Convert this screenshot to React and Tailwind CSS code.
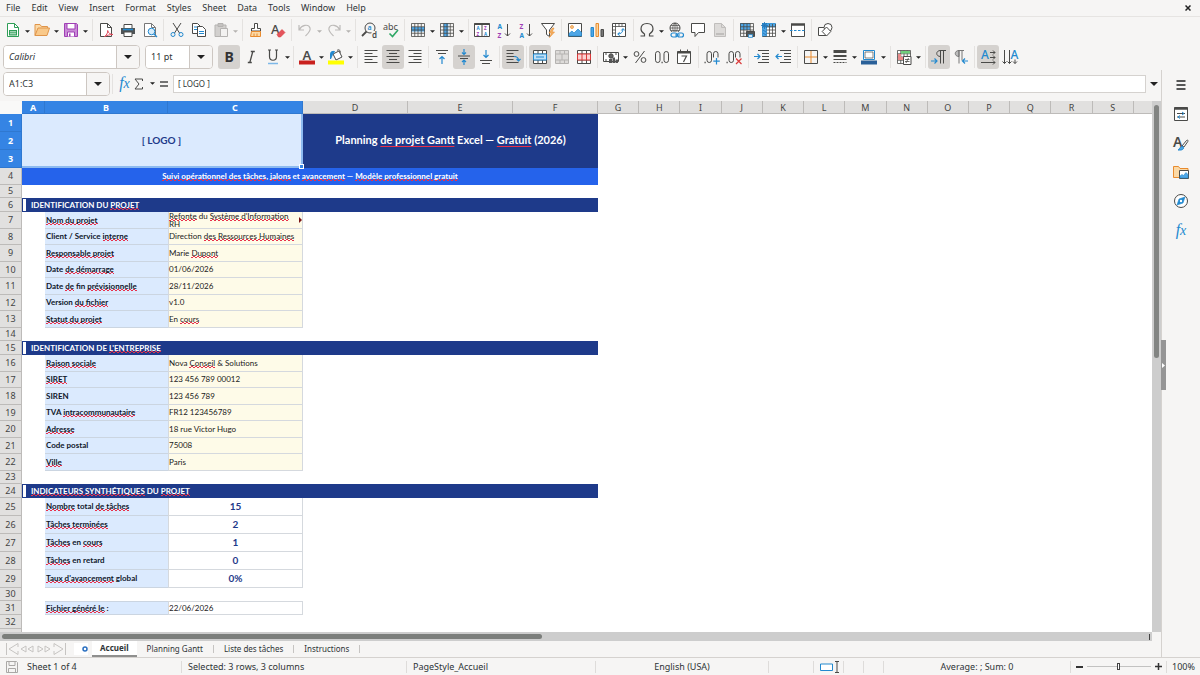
import React from "react";

const G = "#4a4a48";
const B = "#2389cf";
const O = "#e88b2e";
const R = "#d93a3a";
const P = "#a03fb5";

function Svg({ children, className = "size-4" }) {
  return (
    <svg viewBox="0 0 16 16" className={`overflow-visible ${className}`} fill="none" stroke={G} strokeWidth="1" aria-hidden="true">
      {children}
    </svg>
  );
}

function T({ x, y, s = 8, c = G, w = 400, children }) {
  return (
    <text x={x} y={y} fontSize={s} fill={c} stroke="none" fontWeight={w} fontFamily="Noto Sans, sans-serif">
      {children}
    </text>
  );
}

const alignLines = (kind) =>
  [1.5, 4.5, 7.5, 10.5, 13.5].map((y, i) => {
    const len = i % 2 === 0 ? 13 : 8;
    const x = kind === "left" ? 1.5 : kind === "center" ? 8 - len / 2 : 14.5 - len;
    return <path key={y} d={`M${x} ${y}h${len}`} />;
  });

const gridPath = "M1.5 1.5h13v13h-13zM1.5 4.75h13M1.5 8h13M1.5 11.25h13M4.75 1.5v13M8 1.5v13M11.25 1.5v13";

const icons = {
  newDoc: (
    <Svg>
      <path d="M2.5 1.5h7l4 4v9h-11z" fill="#fff" stroke="#2f9e57" />
      <path d="M9.5 1.5v4h4" stroke="#2f9e57" />
      <path d="M4 8h8v5.5H4z" fill="#2f9e57" stroke="none" />
      <path d="M5 9.8h6M5 11.8h6" stroke="#fff" strokeWidth=".8" />
    </Svg>
  ),
  open: (
    <Svg>
      <path d="M1 13.5v-11h5l1.5 2h6v2.5" fill="#fbd9a6" stroke="#e0954a" />
      <path d="M1 13.5l3-7.5h11.5l-2.5 7.5z" fill="#f9c98a" stroke="#e0954a" />
    </Svg>
  ),
  save: (
    <Svg>
      <path d="M1.5 1.5h12l1 1v12h-13z" fill="#c98ad6" stroke={P} />
      <path d="M4 1.5h8V7H4z" fill="#fff" stroke={P} />
      <path d="M4.5 14.5v-4.500h7v4.500" fill="#fff" stroke={P} />
      <path d="M6 11.500h1.500v3H6z" fill={P} stroke="none" />
    </Svg>
  ),
  pdf: (
    <Svg>
      <path d="M2.500 1.500h7l4 4v9h-11z" fill="#fff" />
      <path d="M9.500 1.500v4h4" />
      <path d="M6.500 14.500c2-1 3.500-4 3.200-6 .5 2.500 2.500 4 5.300 4-3 0-6 .8-8.500 2z" stroke="#e0485a" fill="#fff" />
    </Svg>
  ),
  print: (
    <Svg>
      <path d="M4 6V2.500h8V6" fill="#fff" />
      <path d="M1 6h14v6H1z" fill="#4f5456" stroke="none" />
      <path d="M3 7.500h10" stroke={B} strokeWidth="1.500" />
      <path d="M4 10h8v4.500H4z" fill="#fff" />
    </Svg>
  ),
  preview: (
    <Svg>
      <path d="M2.500 1.500h7l4 4v9h-11z" fill="#fff" stroke="#777" />
      <path d="M9.500 1.500v4h4" stroke="#777" />
      <circle cx="9.500" cy="9.500" r="3.300" fill="#d7ecfa" stroke={B} />
      <path d="M12 12l3 3" stroke={B} strokeWidth="1.300" />
    </Svg>
  ),
  cut: (
    <Svg>
      <path d="M4 1l6.500 10M12 1L5.500 11" />
      <circle cx="4" cy="12.500" r="2" stroke={B} />
      <circle cx="12" cy="12.500" r="2" stroke={B} />
    </Svg>
  ),
  copy: (
    <Svg>
      <path d="M1.500 1.500h5l3 3v7h-8z" fill="#fff" />
      <path d="M3 5h4M3 7.500h3" stroke={B} />
      <path d="M6.500 4.500h5l3 3v7h-8z" fill="#fff" />
      <path d="M8 9.500h5M8 11.500h5" stroke={B} />
    </Svg>
  ),
  paste: (
    <Svg>
      <path d="M2 3h11v11.500H2z" fill="#d2d0ce" stroke="#b5b3b1" />
      <path d="M5 1.500h5v3H5z" fill="#c5c3c1" stroke="#b5b3b1" />
      <path d="M7.500 6.500h7v8h-7z" fill="#f3f2f1" stroke="#b5b3b1" />
    </Svg>
  ),
  brush: (
    <Svg>
      <path d="M6.500 1.500h3v5h3v2.500h-9V6.500h3z" fill="#fff" />
      <path d="M3.500 9.500h9v5h-10z" fill="#fbd9a6" stroke={O} />
      <path d="M6 11.500v3M9 11.500v3" stroke={O} />
    </Svg>
  ),
  clear: (
    <Svg>
      <T x={1} y={12} s={13} w={500}>A</T>
      <path d="M7 12.500l5-5 3 3-4.500 4.500h-2z" fill="#e4545c" stroke={R} strokeWidth=".6" />
    </Svg>
  ),
  undo: (
    <Svg>
      <path d="M2 3v5h5M2.500 7.500c2-4.500 9-6 10.500-1.500 1 3-2.500 6-4.500 8" stroke="#bdbbb9" strokeWidth="1.200" />
    </Svg>
  ),
  redo: (
    <Svg>
      <path d="M14 3v5H9M13.500 7.500C11.500 3 4.500 1.500 3 6c-1 3 2.500 6 4.500 8" stroke="#bdbbb9" strokeWidth="1.200" />
    </Svg>
  ),
  find: (
    <Svg>
      <circle cx="9" cy="6" r="5" />
      <path d="M5.500 9.500L1 14" strokeWidth="1.800" />
      <path d="M10.500 9h5.500v7h-5.500z" fill="#f6f5f4" stroke="none" />
      <T x={6.500} y={8} s={7} c={B} w={600}>a</T>
      <T x={11} y={15.500} s={8} w={600}>d</T>
    </Svg>
  ),
  spell: (
    <Svg>
      <T x={0} y={7.500} s={9}>abc</T>
      <path d="M6.500 11.500l3 3L15 8" stroke="#2fa866" strokeWidth="1.600" />
    </Svg>
  ),
  rows: (
    <Svg>
      <path d="M1 5h14v4.500H1z" fill="#4ea6e6" stroke="none" />
      <path d={gridPath} strokeWidth=".8" />
    </Svg>
  ),
  cols: (
    <Svg>
      <path d="M4.750 1h4.500v14h-4.500z" fill="#4ea6e6" stroke="none" />
      <path d={gridPath} strokeWidth=".8" />
    </Svg>
  ),
  sort: (
    <Svg>
      <path d="M.5 1.500h15v13H.5z" fill="#fff" />
      <path d="M.5 2h15" strokeWidth="2" />
      <path d="M8 2v12.500" />
      <T x={2.500} y={7.500} s={4.500} c={B} w={700}>A</T>
      <T x={2.500} y={13.800} s={4.500} c={P} w={700}>Z</T>
      <T x={10} y={7.500} s={4.500} c={P} w={700}>Z</T>
      <T x={10} y={13.800} s={4.500} c={B} w={700}>A</T>
    </Svg>
  ),
  asc: (
    <Svg>
      <T x={1.500} y={6.500} s={6.500} c={B} w={700}>A</T>
      <T x={1.500} y={15.500} s={6.500} c={P} w={700}>Z</T>
      <path d="M11.500 2v12M9 11.500l2.500 2.500 2.500-2.500" />
    </Svg>
  ),
  desc: (
    <Svg>
      <T x={1.500} y={6.500} s={6.500} c={P} w={700}>Z</T>
      <T x={1.500} y={15.500} s={6.500} c={B} w={700}>A</T>
      <path d="M11.500 2v12M9 11.500l2.500 2.500 2.500-2.500" />
    </Svg>
  ),
  filter: (
    <Svg>
      <path d="M1.500 1.500h13L9.500 8v6.500l-3-2V8z" fill="#fff" />
      <path d="M12.500 6l-3.500 5h2.500L9.500 15.500 14.500 10H12l2-4z" fill="#f4b266" stroke={O} strokeWidth=".6" />
    </Svg>
  ),
  image: (
    <Svg>
      <path d="M1.500 1.500h13v13h-13z" fill="#fff" />
      <circle cx="5" cy="5" r="1.500" fill="#f7c98b" stroke={O} strokeWidth=".7" />
      <path d="M2 14v-2.500L5 9l2 2 4-4 3.500 3.500V14z" fill="#4ea6e6" stroke={B} strokeWidth=".7" />
    </Svg>
  ),
  chart: (
    <Svg>
      <path d="M2 5.500h2.500v9H2z" fill="#4ea6e6" stroke={B} />
      <path d="M7 1.500h2.500v13H7z" fill="#fbd49c" stroke={O} />
      <path d="M12 7.500h2.500v7H12z" fill="#777" />
    </Svg>
  ),
  pivot: (
    <Svg>
      <path d="M1.500 1.500h13v13h-13z" fill="#fff" />
      <path d="M4.500 1.500v13M1.500 4.500h13M8 1.500v3M11 1.500v3M1.500 8h3M1.500 11h3" strokeWidth=".8" />
      <path d="M7 12c3 0 5-2 5-5M10.300 8.500L12 6.500l1.700 2M8.700 10.300L6.700 12l2 1.700" stroke={B} />
    </Svg>
  ),
  omega: (
    <Svg>
      <path d="M1.500 14h4v-2C3 10.500 2 9 2 7c0-3.500 2.500-5.500 6-5.500S14 3.500 14 7c0 2-1 3.500-3.500 5v2h4" strokeWidth="1.200" />
    </Svg>
  ),
  link: (
    <Svg>
      <circle cx="7" cy="6" r="5" />
      <path d="M7 1v10M2 6h10M3 3.500h8M3 8.500h8M7 1c-3 3-3 7 0 10M7 1c3 3 3 7 0 10" strokeWidth=".7" />
      <path d="M3 10h13v6H3z" fill="#f6f5f4" stroke="none" />
      <rect x="3" y="11" width="6" height="4" rx="2" stroke={B} strokeWidth="1.200" />
      <rect x="9.500" y="11" width="6" height="4" rx="2" stroke={B} strokeWidth="1.200" />
      <path d="M7 13h5" stroke={B} />
    </Svg>
  ),
  comment: (
    <Svg>
      <path d="M1.500 1.500h13v9h-6L5 14.500v-4H1.500z" fill="#fff" />
    </Svg>
  ),
  headfoot: (
    <Svg>
      <path d="M2.500 1.500h7l4 4v9h-11z" fill="#dddbd9" stroke="#c0bebc" />
      <path d="M4 11h8v2H4z" fill="#c0bebc" stroke="none" />
      <path d="M9.500 1.500v4h4" stroke="#c0bebc" />
    </Svg>
  ),
  printArea: (
    <Svg>
      <path d="M1 1h10v7H1z" fill="#4ea6e6" stroke="none" />
      <path d={gridPath} strokeWidth=".8" />
      <path d="M7.500 9.500h8v5h-8z" fill="#4f5456" />
      <path d="M9.500 12.500h4v3h-4z" fill="#cfe6f7" stroke={B} strokeWidth=".7" />
    </Svg>
  ),
  freeze: (
    <Svg>
      <path d="M1.500 1.500h13v13h-13z" fill="#fff" stroke="none" />
      <path d="M1.500 1.500h4v13h-4zM1.500 1.500h13v3.300h-13z" fill="#4ea6e6" stroke={B} strokeWidth=".8" />
      <path d="M5.500 8h9M5.500 11.250h9M8.500 2v12.500M11.500 2v12.500M14.500 2v12.500M1.500 14.500h13M5.500 4.800h9" strokeWidth=".8" />
      <path d="M3.500 0v7M0 3.500h7M1 1l5 5M6 1L1 6M2 8l3 2M2 11l3 2" stroke="#2272b4" strokeWidth=".8" />
    </Svg>
  ),
  split: (
    <Svg>
      <path d="M1.500 2v12.500h13V2" fill="#fff" />
      <path d="M1 2.500h14" strokeWidth="2.500" />
      <path d="M0 8.500h16" stroke={B} strokeDasharray="2.500 1.500" />
    </Svg>
  ),
  shapes: (
    <Svg>
      <path d="M1.500 5.500h8v8h-8z" fill="#fff" />
      <circle cx="11" cy="5.500" r="4" fill="#fff" />
      <path d="M9.500 5l4.300 4.500-4.300 4.500-4.300-4.500z" fill="#fff" />
    </Svg>
  ),
  bold: <Svg><T x={3.500} y={13} s={14} w={700} c="#333">B</T></Svg>,
  italic: (
    <Svg>
      <path d="M9.800 2.500L6.800 13.500M7.800 2.500h4M4.800 13.500h4" strokeWidth="1.300" />
    </Svg>
  ),
  underline: (
    <Svg>
      <path d="M4.500 1v6.500c0 5 7 5 7 0V1M3 1h3M10 1h3" strokeWidth="1.200" />
      <path d="M3 14.500h10" stroke="#7db8e8" strokeWidth="1.500" />
    </Svg>
  ),
  fontColor: (
    <Svg>
      <T x={3.500} y={10.500} s={13} w={600}>A</T>
      <path d="M0 13.500h16" stroke="#c9211e" strokeWidth="4" />
    </Svg>
  ),
  highlight: (
    <Svg>
      <path d="M5 5l6-3 3 6-6 3z" fill="#fff" />
      <path d="M9 1.500c2-1.500 3-.5 3.500 2" />
      <path d="M2.500 10V4.500c0-1.500 2-2.500 4-2l-2 3z" fill={B} stroke={B} />
      <path d="M0 13.500h16" stroke="#ffff00" strokeWidth="4" />
    </Svg>
  ),
  left: <Svg>{alignLines("left")}</Svg>,
  center: <Svg>{alignLines("center")}</Svg>,
  right: <Svg>{alignLines("right")}</Svg>,
  top: (
    <Svg>
      <path d="M2 1.500h12M4 4.500h8" />
      <path d="M8 15V7.500M5.500 10L8 7.500l2.500 2.500" stroke={B} strokeWidth="1.200" />
    </Svg>
  ),
  middle: (
    <Svg>
      <path d="M2 7h12M4 9.500h8" />
      <path d="M8 0v5M6 3.500l2 2 2-2M8 16v-4.500M6 13l2-2 2 2" stroke={B} strokeWidth="1.200" />
    </Svg>
  ),
  bottom: (
    <Svg>
      <path d="M2 11.500h12M4 14.500h8" />
      <path d="M8 1v7.500M5.500 6L8 8.500 10.500 6" stroke={B} strokeWidth="1.200" />
    </Svg>
  ),
  wrap: (
    <Svg>
      <path d="M1.500 1.500h12M1.500 4.500h7M1.500 7.500h9M1.500 10.500h7M1.500 13.500h12" />
      <path d="M9 7.500c3 0 4.500 1 4.500 4M11.500 10l2 2 2-2" stroke={B} strokeWidth="1.200" />
    </Svg>
  ),
  merge: (
    <Svg>
      <path d="M1.500 1.500h13v13h-13z" fill="#fff" />
      <path d="M1.500 5h13M1.500 11h13M6 1.500V5M10.500 1.500V5M6 11v3.500M10.500 11v3.500" />
      <path d="M1.500 5h13v6h-13z" fill="#bfe0f7" stroke={B} />
      <path d="M4 8h8" stroke={B} />
    </Svg>
  ),
  mergeOff: (
    <Svg>
      <path d="M1.500 1.500h13v13h-13z" fill="#dddbd9" stroke="#b5b3b1" />
      <path d="M1.500 5h13M1.500 11h13M6 1.500V5M10.500 1.500V5M6 11v3.500M10.500 11v3.500M8 5v6" stroke="#b5b3b1" />
    </Svg>
  ),
  unmerge: (
    <Svg>
      <path d="M1.500 1.500h13v13h-13z" fill="#fff" />
      <path d="M1.500 5h13M1.500 11h13M6 1.500V5M10.500 1.500V5M6 11v3.500M10.500 11v3.500" />
      <path d="M1.500 5h13v6h-13zM6 5v6M10.500 5v6" fill="#fbd3d3" stroke={R} />
    </Svg>
  ),
  currency: (
    <Svg>
      <path d="M.5 3.500h15v9H.5z" fill="#fff" />
      <circle cx="8" cy="7" r="2.200" fill="#666" />
      <path d="M2 5h2M12 5h2M2 11h2" />
      <path d="M6 10h3v4H6zM9.500 8.500h2.500V14H9.500zM12.500 10.500H15V14h-2.500z" fill="#555" stroke="none" />
    </Svg>
  ),
  percent: (
    <Svg>
      <circle cx="4.500" cy="5" r="2.400" />
      <circle cx="11.500" cy="11" r="2.400" />
      <path d="M12.500 2l-9 12" />
    </Svg>
  ),
  number: (
    <Svg>
      <rect x="1.500" y="2.500" width="4.500" height="11" rx="2.250" />
      <path d="M7.500 13.500h1.200" strokeWidth="1.300" />
      <rect x="10" y="2.500" width="4.500" height="11" rx="2.250" />
    </Svg>
  ),
  date: (
    <Svg>
      <path d="M1.500 2.500h13v12h-13z" fill="#fff" />
      <path d="M1.500 3.500h13" strokeWidth="2" />
      <path d="M4.500 .5v3M11.500 .5v3" />
      <path d="M5.500 7h5l-3 6" strokeWidth="1.200" />
    </Svg>
  ),
  addDec: (
    <Svg>
      <path d="M.5 13.500h1.200" strokeWidth="1.300" />
      <rect x="3" y="2.500" width="4.500" height="11" rx="2.250" />
      <rect x="9.500" y="2.500" width="4.500" height="11" rx="2.250" />
      <path d="M9 8.500h7v7H9z" fill="#f6f5f4" stroke="none" />
      <path d="M12.500 9v6.500M9.300 12.200h6.500" stroke={B} strokeWidth="1.200" />
    </Svg>
  ),
  delDec: (
    <Svg>
      <path d="M.5 13.500h1.200" strokeWidth="1.300" />
      <rect x="3" y="2.500" width="4.500" height="11" rx="2.250" />
      <rect x="9.500" y="2.500" width="4.500" height="11" rx="2.250" />
      <path d="M9 8.500h7v7H9z" fill="#f6f5f4" stroke="none" />
      <path d="M10 9.500l5.500 5.500M15.500 9.500L10 15" stroke={R} strokeWidth="1.200" />
    </Svg>
  ),
  indent: (
    <Svg>
      <path d="M4 1.500h11M8 4.500h7M8 7.500h7M8 10.500h7M4 13.500h11" />
      <path d="M0 7.500h6M3.500 5L6 7.500 3.500 10" stroke={B} strokeWidth="1.200" />
    </Svg>
  ),
  outdent: (
    <Svg>
      <path d="M4 1.500h11M8 4.500h7M8 7.500h7M8 10.500h7M4 13.500h11" />
      <path d="M0 7.500h6M2.500 5L0 7.500 2.500 10" stroke={B} strokeWidth="1.200" />
    </Svg>
  ),
  borders: (
    <Svg>
      <path d="M8 2v12M2 8h12" stroke={O} />
      <path d="M1.500 1.500h13v13h-13z" />
    </Svg>
  ),
  lineStyle: (
    <Svg>
      <path d="M1.500 2.500h13" strokeWidth="3" />
      <path d="M1.500 7h13" strokeWidth="2" />
      <path d="M1.500 10.500h13" />
      <path d="M1.500 13.500h13" strokeDasharray="2 1" />
    </Svg>
  ),
  lineColor: (
    <Svg>
      <path d="M2.500 1.500h11v9h-11z" fill="#fff" stroke={B} />
      <path d="M4 3h8v6H4z" strokeWidth=".7" />
      <path d="M0 13.500h16" stroke="#2a6099" strokeWidth="4" />
    </Svg>
  ),
  cond: (
    <Svg>
      <path d={gridPath} strokeWidth=".8" fill="#fff" />
      <path d="M5 2h9v2.500H5z" fill="#6fcf7c" stroke="none" />
      <path d="M2 5h3v6H2zM5 8h3v3H5z" fill="#e88a8a" stroke="none" />
      <path d="M7.500 7.500h7.500v8H7.500z" fill="#fff" />
      <path d="M9 10.500h4.500M9 12.500h4.500M12.500 9l-2.500 5" strokeWidth=".8" />
    </Svg>
  ),
  ltr: (
    <Svg>
      <path d="M9 1.500h6M9.500 1.500v13M12.500 1.500v13M9.500 1.500c-5 0-5 6 0 6" fill="none" />
      <path d="M0 12h6M3.500 9.500L6 12l-2.500 2.500" stroke={B} strokeWidth="1.200" />
    </Svg>
  ),
  rtl: (
    <Svg>
      <path d="M5 1.500h6M6 1.500v13M9 1.500v10M6 1.500c-5 0-5 6 0 6z" fill="#bbb" stroke="#777" />
      <path d="M15 12H9.500M12 9.500L9.500 12l2.500 2.500" stroke={B} strokeWidth="1.200" />
    </Svg>
  ),
  textLtr: (
    <Svg>
      <T x={1} y={9.500} s={12} w={500} c={B}>A</T>
      <path d="M10 3.500h5M13 1.500l2 2-2 2M10 8.500h5M13 6.500l2 2-2 2M1 13.500h14M13 11.500l2 2-2 2" />
    </Svg>
  ),
  textTtb: (
    <Svg>
      <T x={8.500} y={9.500} s={12} w={500} c={B}>A</T>
      <path d="M2.500 1v13.500M.5 12.500l2 2 2-2M7.500 1v13.500M5.500 12.500l2 2 2-2M13 10.500v4M11 12.500l2 2 2-2" />
    </Svg>
  ),
};

const SEP = "sep";
const GAP = "gap";

const bar1 = [
  ["newDoc", "New", 1], ["open", "Open", 1], ["save", "Save", 1], GAP,
  ["pdf", "Export as PDF"], ["print", "Print"], ["preview", "Print Preview"], SEP,
  ["cut", "Cut"], ["copy", "Copy"], ["paste", "Paste", 2], GAP,
  ["brush", "Clone Formatting"], ["clear", "Clear Direct Formatting"], SEP,
  ["undo", "Undo", 2], ["redo", "Redo", 2], GAP,
  ["find", "Find and Replace"], ["spell", "Spelling"], SEP,
  ["rows", "Row", 1], ["cols", "Column", 1], GAP,
  ["sort", "Sort"], ["asc", "Sort Ascending"], ["desc", "Sort Descending"], ["filter", "AutoFilter"], SEP,
  ["image", "Insert Image"], ["chart", "Insert Chart"], ["pivot", "Pivot Table"], GAP,
  ["omega", "Special Character", 1], ["link", "Hyperlink"], ["comment", "Comment"], ["headfoot", "Headers and Footers"], SEP,
  ["printArea", "Define Print Area"], ["freeze", "Freeze Rows and Columns", 1], ["split", "Split Window"], SEP,
  ["shapes", "Show Draw Functions"],
];

const bar2 = [
  ["bold", "Bold", 0, true], ["italic", "Italic"], ["underline", "Underline", 1], SEP,
  ["fontColor", "Font Color", 1], ["highlight", "Background Color", 1], GAP,
  ["left", "Align Left"], ["center", "Center Horizontally", 0, true], ["right", "Align Right"], SEP,
  ["top", "Align Top"], ["middle", "Center Vertically", 0, true], ["bottom", "Align Bottom"], SEP,
  ["wrap", "Wrap Text", 0, true], SEP,
  ["merge", "Merge and Center Cells", 0, true], ["mergeOff", "Merge Cells"], ["unmerge", "Unmerge Cells"], SEP,
  ["currency", "Format as Currency", 1], ["percent", "Format as Percent"], ["number", "Format as Number"], ["date", "Format as Date"], GAP,
  ["addDec", "Add Decimal Place"], ["delDec", "Delete Decimal Place"], GAP,
  ["indent", "Increase Indent"], ["outdent", "Decrease Indent"], SEP,
  ["borders", "Borders", 1], ["lineStyle", "Border Style", 1], ["lineColor", "Border Color", 1], GAP,
  ["cond", "Conditional Formatting", 1], GAP,
  ["ltr", "Left-To-Right", 0, true], ["rtl", "Right-To-Left"], SEP,
  ["textLtr", "Text direction left to right", 0, true], ["textTtb", "Text direction top to bottom"],
];

function Caret({ big, dim }) {
  return (
    <svg viewBox="0 0 8 4" className={big ? "h-1 w-2" : "h-[3px] w-[5px]"} aria-hidden="true">
      <path d="M0 0h8L4 4z" fill={dim ? "#b5b3b1" : "#222"} />
    </svg>
  );
}

function Tools({ items }) {
  return items.map((it, i) => {
    if (it === SEP || it === GAP)
      return (
        <div key={i} className={`flex h-[22px] shrink-0 justify-center ${it === SEP ? "w-[5px]" : "w-[6px]"}`}>
          <div className="w-px bg-[#e4e2e0]" />
        </div>
      );
    const [icon, label, arrow, on] = it;
    return (
      <div key={i} className="flex shrink-0 items-center">
        <button
          aria-label={label}
          className={`flex h-6 w-[22px] items-center justify-center rounded-[3px] ${on ? "bg-[#d5d2cf]" : ""}`}
        >
          {icons[icon]}
        </button>
        {arrow ? (
          <button aria-label={`${label} options`} className="flex h-6 w-[7px] items-center justify-center pt-0.5">
            <Caret dim={arrow === 2} />
          </button>
        ) : null}
      </div>
    );
  });
}

function Combo({ label, value, width, italic }) {
  return (
    <div className={`flex h-6 shrink-0 overflow-hidden rounded-[4px] border border-[#cdc7c2] bg-white ${width}`}>
      <input
        aria-label={label}
        defaultValue={value}
        className={`min-w-0 flex-1 bg-white px-[5px] text-[9px] text-[#2e3436] outline-none ${italic ? "italic" : ""}`}
      />
      <button
        aria-label={`${label} list`}
        className="flex w-[23px] items-center justify-center border-l border-[#cdc7c2] bg-[#f6f5f4]"
      >
        <Caret big />
      </button>
    </div>
  );
}

const wave =
  "bg-[linear-gradient(90deg,#e8304a_50%,transparent_50%),linear-gradient(90deg,transparent_50%,#e8304a_50%)] bg-[length:4px_1px,4px_1px] bg-[position:0_100%,0_calc(100%-1px)] bg-repeat-x";

/* Text between asterisks is flagged by the spell checker. */
function Words({ text, straight }) {
  return text.split("*").map((part, i) =>
    i % 2 ? (
      <span key={i} className={straight ? "underline decoration-[#e8304a] decoration-1 underline-offset-2" : wave}>
        {part}
      </span>
    ) : (
      <React.Fragment key={i}>{part}</React.Fragment>
    )
  );
}

const rows = [
  { n: 1, h: "h-[18px]", kind: "title" },
  { n: 2, h: "h-[18px]", kind: "merged" },
  { n: 3, h: "h-[18px]", kind: "merged" },
  { n: 4, h: "h-[17px]", kind: "subtitle" },
  { n: 5, h: "h-[13px]" },
  { n: 6, h: "h-[14px]", kind: "section", a: "IDENTIFICATION DU *PROJET*" },
  { n: 7, h: "h-[17px]", kind: "info", a: "*Nom du projet*", b: "*Refonte* du *Système d'Information* RH", over: true },
  { n: 8, h: "h-[16px]", kind: "info", a: "Client / Service *interne*", b: "Direction *des Ressources Humaines*" },
  { n: 9, h: "h-[17px]", kind: "info", a: "*Responsable projet*", b: "Marie *Dupont*" },
  { n: 10, h: "h-[16px]", kind: "info", a: "Date *de démarrage*", b: "01/06/2026" },
  { n: 11, h: "h-[17px]", kind: "info", a: "Date *de* fin *prévisionnelle*", b: "28/11/2026" },
  { n: 12, h: "h-[16px]", kind: "info", a: "Version *du fichier*", b: "v1.0" },
  { n: 13, h: "h-[17px]", kind: "info", a: "*Statut du projet*", b: "En *cours*" },
  { n: 14, h: "h-[13px]" },
  { n: 15, h: "h-[14px]", kind: "section", a: "IDENTIFICATION DE *L'ENTREPRISE*" },
  { n: 16, h: "h-[17px]", kind: "info", a: "*Raison sociale*", b: "Nova *Conseil* & Solutions" },
  { n: 17, h: "h-[16px]", kind: "info", a: "*SIRET*", b: "123 456 789 00012" },
  { n: 18, h: "h-[17px]", kind: "info", a: "SIREN", b: "123 456 789" },
  { n: 19, h: "h-[16px]", kind: "info", a: "TVA *intracommunautaire*", b: "FR12 123456789" },
  { n: 20, h: "h-[17px]", kind: "info", a: "*Adresse*", b: "18 rue Victor Hugo" },
  { n: 21, h: "h-[16px]", kind: "info", a: "Code postal", b: "75008" },
  { n: 22, h: "h-[17px]", kind: "info", a: "*Ville*", b: "Paris" },
  { n: 23, h: "h-[13px]" },
  { n: 24, h: "h-[14px]", kind: "section", a: "*INDICATEURS SYNTHÉTIQUES* DU *PROJET*" },
  { n: 25, h: "h-[18px]", kind: "kpi", a: "*Nombre* total *de tâches*", b: "15" },
  { n: 26, h: "h-[18px]", kind: "kpi", a: "*Tâches terminées*", b: "2" },
  { n: 27, h: "h-[18px]", kind: "kpi", a: "*Tâches* en *cours*", b: "1" },
  { n: 28, h: "h-[18px]", kind: "kpi", a: "*Tâches* en retard", b: "0" },
  { n: 29, h: "h-[18px]", kind: "kpi", a: "*Taux d'avancement* global", b: "0%" },
  { n: 30, h: "h-[13px]" },
  { n: 31, h: "h-[14px]", kind: "date", a: "*Fichier généré le* :", b: "22/06/2026" },
  { n: 32, h: "h-[14px]" },
  { n: 33, h: "h-[14px]" },
];

function Cells({ row }) {
  const { kind, a, b, over } = row;
  if (kind === "title")
    return (
      <>
        <td
          colSpan={3}
          rowSpan={3}
          className="relative border-r-2 border-b-2 border-[#8cbaf0] bg-[#dbeafe] p-0 text-center text-[10px] font-bold text-[#1e3a8a]"
        >
          [ LOGO ]
          <span className="absolute -right-[3px] -bottom-[3px] z-10 size-[5px] border border-white bg-[#3584e4]" />
        </td>
        <td colSpan={3} rowSpan={3} className="bg-[#1e3a8a] p-0 pb-0.5 text-center text-[11px] font-bold text-white">
          <Words straight text="Planning *de projet Gantt* Excel — *Gratuit* (2026)" />
        </td>
        <td colSpan={14} rowSpan={3} className="p-0" />
      </>
    );
  if (kind === "merged") return null;
  if (kind === "subtitle")
    return (
      <>
        <td colSpan={6} className="bg-[#2563eb] p-0 pb-0.5 text-center text-[8px] leading-[10px] font-bold text-white">
          <Words text="*Suivi opérationnel des tâches*, *jalons* et *avancement* — *Modèle professionnel gratuit*" />
        </td>
        <td colSpan={14} className="p-0" />
      </>
    );
  if (kind === "section")
    return (
      <>
        <td colSpan={6} className="bg-[#1e3a8a] p-0 text-[8px] leading-[10px] font-bold text-white">
          <div className="flex items-center gap-[5px] pl-px">
            <span className="h-3 w-[3px] bg-white" />
            <span><Words text={a} /></span>
          </div>
        </td>
        <td colSpan={14} className="p-0" />
      </>
    );
  if (kind) {
    const tone = kind === "info" ? "bg-[#fefbe8]" : "bg-white";
    const top = kind === "date" ? "border-t" : "";
    return (
      <>
        <td className="p-0" />
        <td className={`border-b border-[#cbd5e1] bg-[#dbeafe] p-0 pb-px pl-px text-[8px] leading-[10px] font-bold whitespace-nowrap text-[#0f172a] ${top}`}>
          <Words text={a} />
        </td>
        <td
          className={`border-r border-b border-l border-[#d5d9de] p-0 ${over ? "" : "pb-px"} ${top} ${tone} ${
            kind === "kpi" ? "text-center text-[10px] leading-3 font-bold text-[#1e3a8a]" : "text-[8px] leading-[10px] text-[#1a1a1a]"
          }`}
        >
          {over ? (
            <div className="flex h-4 items-center justify-between">
              <span className="leading-[8px]"><Words text={b} /></span>
              <svg viewBox="0 0 3 6" className="h-1.5 w-[3px] shrink-0" aria-hidden="true">
                <path d="M0 0l3 3-3 3z" fill="#7a1515" />
              </svg>
            </div>
          ) : (
            <Words text={b} />
          )}
        </td>
        <td colSpan={17} className="p-0" />
      </>
    );
  }
  return <td colSpan={20} className="p-0" />;
}

function Sheet() {
  const letters = "ABCDEFGHIJKLMNOPQRS".split("");
  return (
    <table className="w-full table-fixed border-separate border-spacing-0">
      <colgroup>
        <col className="w-[22px]" />
        <col className="w-[23px]" />
        <col className="w-[123px]" />
        <col className="w-[135px]" />
        <col className="w-[105px]" />
        <col className="w-[105px]" />
        <col className="w-[85px]" />
        {letters.slice(6).map((l) => <col key={l} />)}
        <col className="w-[18px]" />
      </colgroup>
      <thead>
        <tr className="h-[13px] text-[9px] leading-[11px]">
          <td className="bg-[#f9f9f8] p-0" />
          {letters.map((l, i) => (
            <th
              key={l}
              scope="col"
              className={`border-r p-0 ${
                i < 3
                  ? "border-b border-[#2f78d0] bg-[#3584e4] font-bold text-white"
                  : "border-b border-[#bdbbb9] bg-[#e1e0df] font-normal text-[#444]"
              }`}
            >
              {l}
            </th>
          ))}
          <td className="border-b border-[#bdbbb9] bg-[#e1e0df] p-0" />
        </tr>
      </thead>
      <tbody className="font-['Lato',sans-serif]">
        {rows.map((row) => (
          <tr key={row.n} className={row.h}>
            <th
              scope="row"
              className={`border-r border-b p-0 font-['Noto_Sans',sans-serif] text-[9px] leading-3 ${
                row.n < 4
                  ? "border-[#2f78d0] bg-[#3584e4] font-bold text-white"
                  : "border-[#bdbbb9] bg-[#e1e0df] font-normal text-[#444]"
              }`}
            >
              {row.n}
            </th>
            <Cells row={row} />
          </tr>
        ))}
      </tbody>
    </table>
  );
}

const side = [
  ["Sidebar Settings", <path key="a" d="M3.500 4h9M3.500 8h9M3.500 12h9" strokeWidth="1.500" stroke="#222" />],
  ["Properties", (
    <g key="b">
      <path d="M1.500 1.500h13v13h-13z" fill="#fff" />
      <path d="M1.500 2.500h13" strokeWidth="2.500" />
      <path d="M4 7.500h8M4 11h8" />
      <path d="M9 6l2 1.500L9 9M7 9.500L5 11l2 1.500" stroke={B} />
    </g>
  )],
  ["Styles", (
    <g key="c">
      <T x={0} y={12} s={14} w={600}>A</T>
      <path d="M9 11l4.500-5.500c1-1 2 0 1.300 1L11 12z" fill="#fff" />
      <path d="M5 15c1 0 2-3.500 4-3.500s2.500 3-1 3.500z" fill="#4ea6e6" stroke={B} />
    </g>
  )],
  ["Gallery", (
    <g key="d">
      <path d="M.5 13.500v-11h5l1.500 2h8v9z" fill="#fbd9a6" stroke={O} />
      <path d="M6.500 6.500h9v8h-9z" fill="#fff" />
      <path d="M7 14v-2l2-1.500 1.500 1 2.500-3 2 2V14z" fill="#4ea6e6" stroke={B} strokeWidth=".6" />
    </g>
  )],
  ["Navigator", (
    <g key="e">
      <circle cx="8" cy="8" r="6.500" fill="#fff" />
      <path d="M12 4l-2 6-6 2 2-6z" fill={B} stroke={B} strokeWidth=".6" />
      <circle cx="8" cy="8" r="1.200" fill="#fff" stroke="none" />
    </g>
  )],
];

function Fx() {
  return <span className="font-['Liberation_Serif',serif] text-[16px] leading-4 text-[#2389cf] italic">f<span className="text-[14px]">x</span></span>;
}

function Seg({ className = "", children }) {
  return <div className={`flex h-3 items-center ${className}`}>{children}</div>;
}

export default function App() {
  const menus = ["File", "Edit", "View", "Insert", "Format", "Styles", "Sheet", "Data", "Tools", "Window", "Help"];
  const tabs = ["Accueil", "Planning Gantt", "Liste des tâches", "Instructions"];
  return (
    <div className="flex h-screen flex-col overflow-hidden bg-[#f6f5f4] font-['Noto_Sans',sans-serif] text-[9px] leading-3 text-[#2e3436]">
      <nav className="flex h-[17px] shrink-0 items-center gap-[11px] border-b border-[#e6e4e2] px-[6px]">
        {menus.map((m) => <button key={m}>{m}</button>)}
        <button aria-label="Close document" className="ml-auto flex size-3 items-center justify-center">
          <svg viewBox="0 0 6 6" className="size-1.5" stroke="#222" strokeWidth="1.500" aria-hidden="true">
            <path d="M.5 .5l5 5M5.500 .5l-5 5" />
          </svg>
        </button>
      </nav>
      <div className="flex h-[26px] shrink-0 items-center pl-0.5"><Tools items={bar1} /></div>
      <div className="flex h-[27px] shrink-0 items-center gap-[5px] pl-[3px]">
        <Combo label="Font name" value="Calibri" width="w-[137px]" italic />
        <Combo label="Font size" value="11 pt" width="w-[68px]" />
        <div className="flex items-center"><Tools items={bar2} /></div>
      </div>

      <div className="flex min-h-0 flex-1">
        <div className="flex min-w-0 flex-1 flex-col">
          <div className="flex h-[31px] shrink-0 items-center pb-1 pl-[3px]">
            <Combo label="Name Box" value="A1:C3" width="w-[107px]" />
            <div className="ml-0.5 h-5 w-px bg-[#e4e2e0]" />
            <button aria-label="Function Wizard" className="ml-1 w-[15px] text-center"><Fx /></button>
            <button aria-label="Select Function" className="flex w-[23px] items-center justify-between pl-[2px]">
              <svg viewBox="0 0 9 12" className="h-3 w-[9px]" fill="none" stroke={G} aria-hidden="true">
                <path d="M8.500 3V1H1l4 5-4 5h7.500V9" />
              </svg>
              <Caret />
            </button>
            <button aria-label="Formula" className="flex w-[18px] items-center justify-center">
              <svg viewBox="0 0 8 6" className="h-1.5 w-2" stroke={G} strokeWidth="1.500" aria-hidden="true">
                <path d="M0 1h8M0 5h8" />
              </svg>
            </button>
            <input
              aria-label="Input line"
              defaultValue="[ LOGO ]"
              className="h-[18px] min-w-0 flex-1 border border-[#d5d2cf] bg-white px-1 text-[8px] outline-none"
            />
            <button aria-label="Expand Formula Bar" className="flex w-[15px] items-center justify-center"><Caret big /></button>
          </div>

          <div className="flex min-h-0 flex-1">
            <div className="min-w-0 flex-1 overflow-hidden bg-white"><Sheet /></div>
            <div className="w-[9px] shrink-0 bg-[#cdcdcd] px-[2px] pt-[4px]">
              <div className="h-[48%] rounded-full bg-[#828482]" />
            </div>
          </div>
          <div className="mr-[9px] flex h-[9px] shrink-0 items-center justify-between bg-[#cdcdcd] px-[2px]">
            <div className="h-[5px] w-[47%] rounded-full bg-[#7b7e7b]" />
            <div className="h-1.5 w-px bg-[#444]" />
          </div>

          <div className="flex h-4 shrink-0 items-center pl-[6px] text-[8px]">
            <svg viewBox="0 0 60 12" className="h-3 w-[60px]" fill="none" stroke="#c6c4c2" aria-hidden="true">
              <path d="M.5 0v12M12 .5L3 6l9 5.500V8M12 .5V4M20 3l-5 3 5 3zM27 3l-5 3 5 3zM32 3l5 3-5 3zM39 3l5 3-5 3zM48 .5L57 6l-9 5.500V8M48 .5V4M59.500 0v12" />
            </svg>
            <button aria-label="Add Sheet" className="ml-2 flex h-3 w-[14px] items-center justify-end bg-white">
              <svg viewBox="0 0 6 6" className="size-1.5" fill="none" stroke="#2a6fc0" strokeWidth="1.500" aria-hidden="true">
                <circle cx="3" cy="3" r="2" />
              </svg>
            </button>
            <div className="ml-1 flex h-full items-center">
              {tabs.map((t, i) =>
                i === 0 ? (
                  <button key={t} className="h-full border-b-2 border-[#8f8f8e] bg-white px-2 font-bold">{t}</button>
                ) : (
                  <button key={t} className="h-2 border-r border-[#c6c4c2] px-[10px] leading-[8px]">{t}</button>
                )
              )}
            </div>
          </div>
        </div>

        <aside className="relative flex w-[39px] shrink-0 flex-col items-center gap-[13px] border-l border-[#d5d2cf] pt-[7px]">
          {side.map(([label, art]) => (
            <button key={label} aria-label={label}><Svg>{art}</Svg></button>
          ))}
          <button aria-label="Functions"><Fx /></button>
          <button
            aria-label="Hide sidebar"
            className="absolute top-[46%] -left-px flex h-[50px] w-[5px] items-center justify-center bg-[#959595]"
          >
            <svg viewBox="0 0 3 5" className="h-[5px] w-[3px]" aria-hidden="true"><path d="M0 0l3 2.500L0 5z" fill="#fff" /></svg>
          </button>
        </aside>
      </div>

      <footer className="flex h-[18px] shrink-0 items-center divide-x divide-[#dedcda] border-t border-[#d5d2cf]">
        <Seg className="grow basis-[182px] gap-[9px] pl-[6px]">
          <svg viewBox="0 0 12 12" className="size-3" fill="none" stroke="#aaa8a6" aria-hidden="true">
            <path d="M.5 .5h10l1 1v10H.5zM3 .5v4h6v-4M2.500 11.500v-4h7v4" />
          </svg>
          <span>Sheet 1 of 4</span>
        </Seg>
        <Seg className="grow basis-[225px] pl-[6px]">Selected: 3 rows, 3 columns</Seg>
        <Seg className="grow basis-[189px] pl-[6px]">PageStyle_Accueil</Seg>
        <Seg className="grow basis-[173px] justify-center">English (USA)</Seg>
        <Seg className="basis-[45px]" />
        <Seg className="basis-[30px] gap-[2px] pl-[6px]">
          <svg viewBox="0 0 20 12" className="h-3 w-5" fill="none" aria-hidden="true">
            <path d="M.5 3h12v6.500H.5z" fill="#fff" stroke={B} />
            <path d="M15 .5h4M17 .5v11M15 11.500h4" stroke={G} />
          </svg>
        </Seg>
        <Seg className="basis-[20px]" />
        <Seg className="basis-[20px]" />
        <Seg className="grow basis-[187px] justify-center">Average: ; Sum: 0</Seg>
        <Seg className="basis-[96px] justify-center gap-1">
          <button aria-label="Zoom out" className="h-0.5 w-[7px] bg-[#333]" />
          <input
            type="range"
            aria-label="Zoom"
            defaultValue="50"
            className="h-2 w-16 appearance-none bg-linear-to-b from-transparent from-[3px] via-[#8f8f8e] via-[3px] to-transparent to-[4px] [&::-webkit-slider-thumb]:h-[7px] [&::-webkit-slider-thumb]:w-[3px] [&::-webkit-slider-thumb]:appearance-none [&::-webkit-slider-thumb]:border [&::-webkit-slider-thumb]:border-[#444] [&::-webkit-slider-thumb]:bg-white"
          />
          <button aria-label="Zoom in">
            <svg viewBox="0 0 7 7" className="size-[7px]" stroke="#333" strokeWidth="1.500" aria-hidden="true">
              <path d="M0 3.500h7M3.500 0v7" />
            </svg>
          </button>
        </Seg>
        <Seg className="basis-[33px] justify-center">100%</Seg>
      </footer>
    </div>
  );
}
